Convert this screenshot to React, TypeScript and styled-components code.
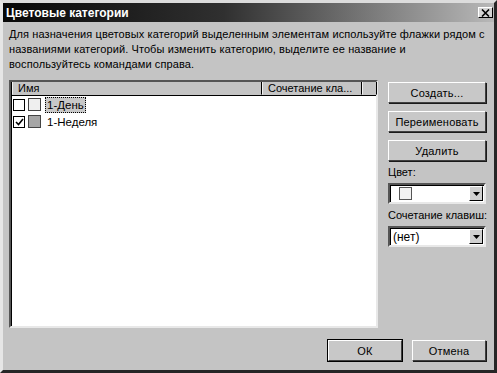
import styled, { createGlobalStyle } from 'styled-components'

const GlobalStyle = createGlobalStyle`
  html, body {
    margin: 0;
    padding: 0;
    background: #c4c4c4;
  }
  body {
    font-family: "Liberation Sans", Arial, sans-serif;
    font-size: 11px;
    color: #000;
  }
`

const Dialog = styled.div`
  width: 497px;
  height: 373px;
  box-sizing: border-box;
  background: #c4c4c4;
  border: 3px solid;
  border-color: #dcdcdc #262626 #262626 #e6e6e6;
  display: flex;
  flex-direction: column;
`

const TitleBar = styled.div`
  height: 19px;
  flex: none;
  display: flex;
  align-items: center;
  justify-content: space-between;
  padding: 0 1px 0 3px;
  background: linear-gradient(to right, #080808 0%, #303030 45%, #b8b8b8 100%);
`

const Title = styled.span`
  color: #fff;
  font-weight: bold;
  font-size: 12px;
`

const CloseButton = styled.div`
  width: 15px;
  height: 11px;
  box-sizing: border-box;
  background: #d4d4d4;
  border: 1px solid;
  border-color: #fff #000 #000 #fff;
  display: flex;
  align-items: center;
  justify-content: center;
`

const Body = styled.div`
  flex: 1;
  display: flex;
  flex-direction: column;
  padding: 5px 8px 0 6px;
`

const Description = styled.p`
  margin: 0;
  line-height: 15px;
  font-size: 11px;
  letter-spacing: 0.1px;
  white-space: nowrap;
`

const Main = styled.div`
  display: flex;
  margin-top: 8px;
  height: 248px;
`

const ListBox = styled.div`
  width: 369px;
  box-sizing: border-box;
  background: #fff;
  border: 2px solid;
  border-color: #555 #e8e8e8 #e8e8e8 #555;
  box-shadow: inset 1px 1px 0 #000;
  display: flex;
  flex-direction: column;
  padding-left: 1px;
`

const Header = styled.div`
  display: flex;
  height: 14px;
  flex: none;
  background: #c4c4c4;
  border-bottom: 1px solid #000;
  box-sizing: border-box;
`

const HeaderCell = styled.div<{ $w: number }>`
  width: ${p => p.$w}px;
  flex: none;
  box-sizing: border-box;
  padding-left: 5px;
  line-height: 12px;
  border: 1px solid;
  border-top: none;
  border-color: #f0f0f0 #000 #c4c4c4 #f0f0f0;
  white-space: nowrap;
  overflow: hidden;
`

const Row = styled.div`
  display: flex;
  align-items: center;
  height: 17px;
  padding-left: 1px;
  gap: 3px;
`

const Check = styled.div`
  width: 12px;
  height: 12px;
  box-sizing: border-box;
  background: #fff;
  border: 1px solid #000;
  display: flex;
  align-items: center;
  justify-content: center;
`

const Swatch = styled.div<{ $c: string }>`
  width: 13px;
  height: 13px;
  box-sizing: border-box;
  background: ${p => p.$c};
  border: 1px solid #444;
  margin-right: 1px;
`

const ItemLabel = styled.span<{ $sel?: boolean }>`
  font-size: 11.5px;
  line-height: 14px;
  padding: 0 1px;
  border: 1px ${p => (p.$sel ? 'dotted #000' : 'solid transparent')};
  background: ${p => (p.$sel ? '#c8c8c8' : 'transparent')};
`

const Side = styled.div`
  width: 98px;
  margin-left: 10px;
  padding-top: 2px;
  display: flex;
  flex-direction: column;
`

const Button = styled.div<{ $default?: boolean }>`
  height: 21px;
  flex: none;
  box-sizing: border-box;
  display: flex;
  align-items: center;
  justify-content: center;
  background: #c8c8c8;
  font-size: 11px;
  letter-spacing: 0.2px;
  border: 1px solid;
  border-color: #fff #404040 #404040 #fff;
  box-shadow: ${p => (p.$default ? '0 0 0 1px #000' : '1px 1px 0 #1a1a1a')};
`

const SideButton = styled(Button)`
  & + & {
    margin-top: 8px;
  }
`

const FieldLabel = styled.div<{ $top: number }>`
  margin-top: ${p => p.$top}px;
  line-height: 13px;
  font-size: 11px;
  white-space: nowrap;
`

const Select = styled.div`
  height: 21px;
  flex: none;
  box-sizing: border-box;
  margin-top: 4px;
  background: #fff;
  border: 2px solid;
  border-color: #555 #e8e8e8 #e8e8e8 #555;
  box-shadow: inset 1px 1px 0 #000;
  display: flex;
  align-items: center;
  padding: 1px 1px 1px 2px;
`

const SelectValue = styled.div`
  flex: 1;
  display: flex;
  align-items: center;
  font-size: 12px;
  padding-left: 1px;
`

const SmallSwatch = styled.div`
  width: 13px;
  height: 13px;
  margin-left: 6px;
  box-sizing: border-box;
  background: #f2f2f2;
  border: 1px solid #555;
`

const ArrowButton = styled.div`
  width: 14px;
  height: 15px;
  box-sizing: border-box;
  background: #d0d0d0;
  border: 1px solid;
  border-color: #fff #000 #000 #fff;
  display: flex;
  align-items: center;
  justify-content: center;
`

const Footer = styled.div`
  display: flex;
  justify-content: flex-end;
  gap: 10px;
  margin-top: 12px;
`

const FooterButton = styled(Button)`
  width: 74px;
`

function Arrow() {
  return (
    <svg width="7" height="4" viewBox="0 0 7 4">
      <path d="M0 0h7L3.5 4z" fill="#000" />
    </svg>
  )
}

export default function App() {
  return (
    <>
      <GlobalStyle />
      <Dialog>
        <TitleBar>
          <Title>Цветовые категории</Title>
          <CloseButton>
            <svg width="9" height="8" viewBox="0 0 9 8">
              <path d="M1 0.5l7 7M8 0.5l-7 7" stroke="#000" strokeWidth="1.6" />
            </svg>
          </CloseButton>
        </TitleBar>
        <Body>
          <Description>
            Для назначения цветовых категорий выделенным элементам используйте флажки рядом с
            <br />
            названиями категорий. Чтобы изменить категорию, выделите ее название и
            <br />
            воспользуйтесь командами справа.
          </Description>
          <Main>
            <ListBox>
              <Header>
                <HeaderCell $w={250}>Имя</HeaderCell>
                <HeaderCell $w={100}>Сочетание кла...</HeaderCell>
                <HeaderCell $w={15} />
              </Header>
              <Row>
                <Check />
                <Swatch $c="#efefef" />
                <ItemLabel $sel>1-День</ItemLabel>
              </Row>
              <Row>
                <Check>
                  <svg width="9" height="8" viewBox="0 0 9 8">
                    <path d="M1 4l2.5 2.5L8 1" stroke="#000" strokeWidth="1.6" fill="none" />
                  </svg>
                </Check>
                <Swatch $c="#a6a6a6" />
                <ItemLabel>1-Неделя</ItemLabel>
              </Row>
            </ListBox>
            <Side>
              <SideButton>Создать...</SideButton>
              <SideButton>Переименовать</SideButton>
              <SideButton>Удалить</SideButton>
              <FieldLabel $top={5}>Цвет:</FieldLabel>
              <Select>
                <SelectValue>
                  <SmallSwatch />
                </SelectValue>
                <ArrowButton>
                  <Arrow />
                </ArrowButton>
              </Select>
              <FieldLabel $top={5}>Сочетание клавиш:</FieldLabel>
              <Select>
                <SelectValue>(нет)</SelectValue>
                <ArrowButton>
                  <Arrow />
                </ArrowButton>
              </Select>
            </Side>
          </Main>
          <Footer>
            <FooterButton $default>ОК</FooterButton>
            <FooterButton>Отмена</FooterButton>
          </Footer>
        </Body>
      </Dialog>
    </>
  )
}
